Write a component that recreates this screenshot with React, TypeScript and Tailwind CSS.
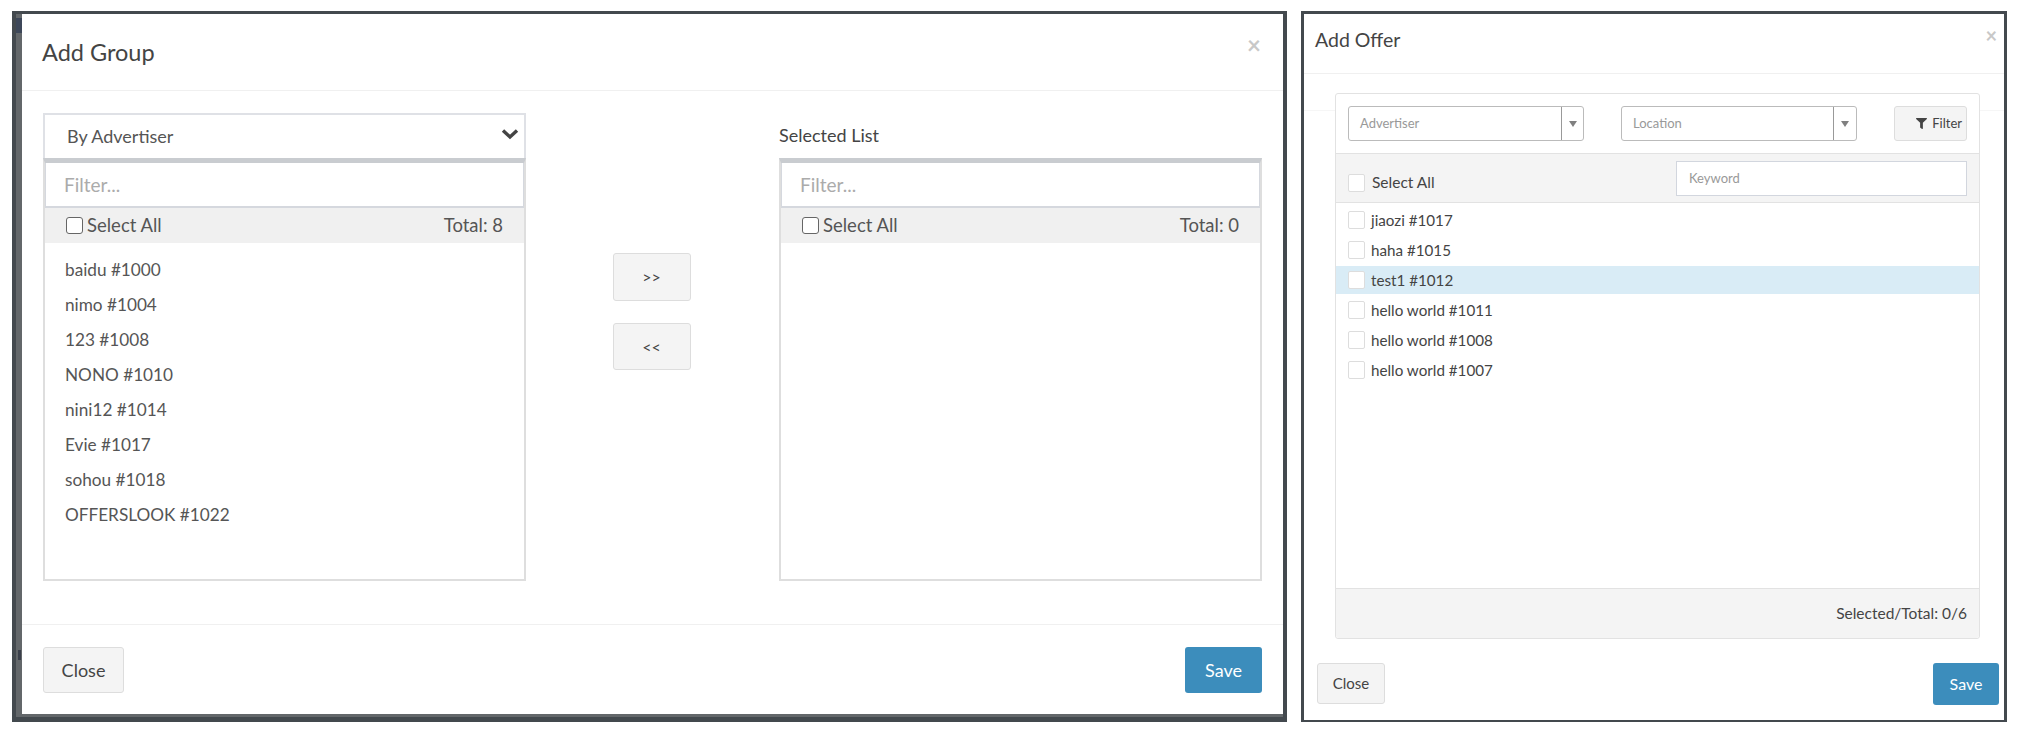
import { FaFilter } from "react-icons/fa";

const groups = [
  "baidu #1000",
  "nimo #1004",
  "123 #1008",
  "NONO #1010",
  "nini12 #1014",
  "Evie #1017",
  "sohou #1018",
  "OFFERSLOOK #1022",
];

const offers = [
  "jiaozi #1017",
  "haha #1015",
  "test1 #1012",
  "hello world #1011",
  "hello world #1008",
  "hello world #1007",
];

function ListBox({ total, children }: { total: number; children?: React.ReactNode }) {
  return (
    <div className="h-[423px] border-2 border-t-[5px] border-[#dedede] border-t-[#c9ccd0]">
      <div className="flex h-[45px] items-center border border-t-0 border-b-2 border-[#d5d8de] bg-white pl-[18px] text-[19px] leading-none text-[#ababab]">
        Filter...
      </div>
      <div className="flex h-[35px] items-center justify-between bg-[#f0f0f0] pl-[21px] pr-[21px] text-[18.5px] text-[#555]">
        <label className="flex items-center gap-[4px]">
          <span className="h-[17px] w-[17px] rounded-[3px] border border-[#666] bg-white" />
          Select All
        </label>
        <span>Total: {total}</span>
      </div>
      {children}
    </div>
  );
}

function OfferCheck() {
  return <span className="h-[18px] w-[17px] shrink-0 rounded-[2px] border border-[#dddddd] bg-white" />;
}

function Combo({ label, addon }: { label: string; addon: string }) {
  return (
    <div className="flex h-[35px] w-[236px] items-stretch rounded-[3px] border border-[#bbb] bg-white text-[13px] text-[#999]">
      <span className="flex flex-1 items-center border-r border-[#999] pl-[11px]">{label}</span>
      <span className={`flex items-center justify-center ${addon}`}>
        <svg width="8" height="6" viewBox="0 0 8 6">
          <path d="M0 0 H8 L4 6 Z" fill="#808080" />
        </svg>
      </span>
    </div>
  );
}

export default function App() {
  return (
    <div className="flex h-[736px] w-[2018px] gap-[14px] bg-white pl-[12px] pt-[11px] font-['Lato',sans-serif]">
      {/* add group */}
      <section className="relative flex h-[711px] w-[1275px] flex-col border-b-[5px] border-l-[4px] border-r-[4px] border-t-[3px] border-[#43494e] bg-white pb-[3px] pl-[6px] shadow-[inset_6px_0_0_#63676a,inset_0_-3px_0_#63676a]">
        <div className="absolute left-0 top-[4px] h-[15px] w-[6px] bg-[#3d4759]" />
        <div className="absolute left-[2px] top-[636px] h-[10px] w-[3px] bg-[#3a3f4a]" />
        <header className="flex h-[77px] shrink-0 items-start justify-between border-b border-[#f0f0f0] pl-[20px] pr-[22px]">
          <h2 className="mt-[24px] text-[23.5px] leading-[28px] text-[#444]">Add Group</h2>
          <span className="mt-[19px] text-[24px] font-bold leading-[24px] text-[#c8c8c8]">×</span>
        </header>

        <div className="flex h-[533px] shrink-0 pl-[21px] pr-[21px] pt-[22px]">
          <div className="w-[483px]">
            <div className="flex h-[45px] items-center justify-between border-2 border-b-0 border-[#dfe1e6] pl-[22px] pr-[5px] text-[18px] text-[#555]">
              By Advertiser
              <svg width="18" height="12" viewBox="0 0 18 12" className="mb-[6px]">
                <path d="M2 2.5 L9 9 L16 2.5" fill="none" stroke="#444" strokeWidth="3.4" />
              </svg>
            </div>
            <ListBox total={8}>
              <ul className="pl-[20px] pt-[9px] text-[17.2px] text-[#555]">
                {groups.map((g) => (
                  <li key={g} className="h-[35px] leading-[35px]">{g}</li>
                ))}
              </ul>
            </ListBox>
          </div>

          <div className="flex flex-1 flex-col items-center gap-[22px] pr-[2px] pt-[140px]">
            <button className="h-[48px] w-[78px] rounded-[3px] border border-[#ddd] bg-[#f4f4f4] text-[16px] text-[#444]">&gt;&gt;</button>
            <button className="h-[47px] w-[78px] rounded-[3px] border border-[#ddd] bg-[#f4f4f4] text-[16px] text-[#444]">&lt;&lt;</button>
          </div>

          <div className="w-[483px]">
            <div className="flex h-[45px] items-center text-[18px] text-[#444]">Selected List</div>
            <ListBox total={0} />
          </div>
        </div>

        <footer className="flex flex-1 items-start justify-between border-t border-[#f0f0f0] px-[21px] pt-[22px]">
          <button className="h-[46px] w-[81px] rounded-[3px] border border-[#ddd] bg-[#f4f4f4] text-[18px] text-[#444]">Close</button>
          <button className="h-[46px] w-[77px] rounded-[3px] bg-[#3c8dbc] text-[18px] text-white">Save</button>
        </footer>
      </section>

      {/* add offer */}
      <section className="relative flex h-[711px] w-[706px] flex-col border-x-[3px] border-b-[2px] border-t-[3px] border-[#43494e] bg-white">
        <div className="absolute left-0 right-0 top-[96px] border-t border-[#f6f6f6]" />
        <header className="flex h-[60px] shrink-0 items-start justify-between border-b border-[#f0f0f0] pl-[11px] pr-[7px]">
          <h2 className="mt-[14px] text-[19.5px] leading-[24px] text-[#444]">Add Offer</h2>
          <span className="mt-[9px] text-[20px] font-bold leading-[24px] text-[#c8c8c8]">×</span>
        </header>

        <div className="relative ml-[31px] mr-[24px] mt-[19px] flex h-[546px] flex-col rounded-[3px] border border-[#e2e2e2] bg-white">
          <div className="flex h-[60px] shrink-0 border-b border-[#e2e2e2] px-[12px] pt-[12px]">
            <Combo label="Advertiser" addon="w-[21px]" />
            <div className="ml-[37px]">
              <Combo label="Location" addon="w-[22px]" />
            </div>
            <button className="ml-[37px] flex h-[35px] w-[73px] items-center justify-end gap-[5px] rounded-[3px] border border-[#ddd] bg-[#f4f4f4] pr-[4px] text-[13px] text-[#444]">
              <FaFilter className="h-[11px] w-[11px]" />
              Filter
            </button>
          </div>

          <div className="flex h-[49px] shrink-0 items-start justify-between border-b border-[#e2e2e2] bg-[#f4f4f4] px-[12px] pt-[7px]">
            <label className="mt-[10px] flex items-center gap-[7px] text-[15.5px] text-[#444]">
              <OfferCheck />
              Select All
            </label>
            <div className="flex h-[35px] w-[291px] items-center border border-[#d2d6de] bg-white pl-[12px] text-[13px] text-[#999]">
              Keyword
            </div>
          </div>

          <ul className="mt-[2px] flex-1">
            {offers.map((o) => (
              <li key={o} className="flex h-[30px] items-center">
                <div className={`flex h-[28px] w-full items-center gap-[6px] pl-[12px] text-[15.2px] text-[#444] ${o === "test1 #1012" ? "bg-[#d9ecf6]" : ""}`}>
                  <OfferCheck />
                  {o}
                </div>
              </li>
            ))}
          </ul>

          <div className="flex h-[50px] shrink-0 items-center justify-end rounded-b-[3px] border-t border-[#e2e2e2] bg-[#f4f4f4] pr-[12px] text-[15.5px] text-[#444]">
            Selected/Total: 0/6
          </div>
        </div>

        <footer className="mt-[24px] flex items-start justify-between pl-[13px] pr-[5px]">
          <button className="h-[41px] w-[68px] rounded-[3px] border border-[#ddd] bg-[#f4f4f4] text-[15px] text-[#444]">Close</button>
          <button className="h-[42px] w-[66px] rounded-[3px] bg-[#3c8dbc] text-[16px] text-white">Save</button>
        </footer>
      </section>
    </div>
  );
}
